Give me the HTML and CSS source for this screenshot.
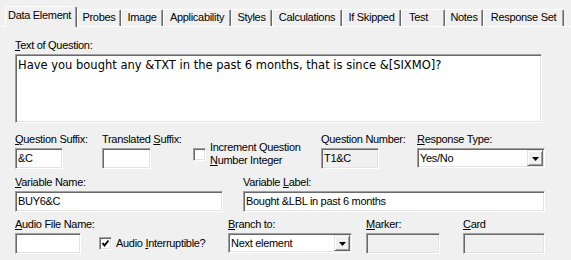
FILE: index.html
```html
<!DOCTYPE html>
<html>
<head>
<meta charset="utf-8">
<link rel="stylesheet" href="styles.css">
</head>
<body>
<div class="tabs">
  <div class="tab active">Data Element</div>
  <div class="tab">Probes</div>
  <div class="tab">Image</div>
  <div class="tab">Applicability</div>
  <div class="tab">Styles</div>
  <div class="tab">Calculations</div>
  <div class="tab">If Skipped</div>
  <div class="tab tab-left">Test</div>
  <div class="tab">Notes</div>
  <div class="tab">Response Set</div>
</div>
<div class="panel">
  <div class="lbl"><u>T</u>ext of Question:</div>
  <div class="textarea">Have you bought any &amp;TXT in the past 6 months, that is since &amp;[SIXMO]?</div>

  <div class="row row2">
    <div class="field">
      <div class="lbl"><u>Q</u>uestion Suffix:</div>
      <div class="input w-qsuffix">&amp;C</div>
    </div>
    <div class="field">
      <div class="lbl">Translated <u>S</u>uffix:</div>
      <div class="input w-tsuffix"></div>
    </div>
    <div class="check two-line">
      <div class="box"></div>
      <div class="check-text">Increment Question<br><u>N</u>umber Integer</div>
    </div>
    <div class="field">
      <div class="lbl">Question Number:</div>
      <div class="input disabled w-qnum">T1&amp;C</div>
    </div>
    <div class="field">
      <div class="lbl"><u>R</u>esponse Type:</div>
      <div class="select w-rtype">
        <span class="sel-text">Yes/No</span>
        <span class="drop"><svg width="7" height="4" viewBox="0 0 7 4"><polygon points="0,0 7,0 3.5,4" fill="#000"/></svg></span>
      </div>
    </div>
  </div>

  <div class="row row3">
    <div class="field">
      <div class="lbl"><u>V</u>ariable Name:</div>
      <div class="input w-vname">BUY6&amp;C</div>
    </div>
    <div class="field">
      <div class="lbl">Variable <u>L</u>abel:</div>
      <div class="input w-vlabel">Bought &amp;LBL in past 6 months</div>
    </div>
  </div>

  <div class="row row4">
    <div class="field">
      <div class="lbl"><u>A</u>udio File Name:</div>
      <div class="input w-audio"></div>
    </div>
    <div class="check one-line">
      <div class="box"><svg width="9" height="9" viewBox="0 0 9 9"><polyline points="1.5,4 3.5,6.5 7.5,1.5" fill="none" stroke="#000" stroke-width="2"/></svg></div>
      <div class="check-text">Audio <u>I</u>nterruptible?</div>
    </div>
    <div class="field">
      <div class="lbl"><u>B</u>ranch to:</div>
      <div class="select w-branch">
        <span class="sel-text">Next element</span>
        <span class="drop"><svg width="7" height="4" viewBox="0 0 7 4"><polygon points="0,0 7,0 3.5,4" fill="#000"/></svg></span>
      </div>
    </div>
    <div class="field">
      <div class="lbl"><u>M</u>arker:</div>
      <div class="input disabled w-marker"></div>
    </div>
    <div class="field">
      <div class="lbl"><u>C</u>ard</div>
      <div class="input disabled w-card"></div>
    </div>
  </div>
</div>
</body>
</html>
```
FILE: styles.css
```css
html, body {
  margin: 0;
  padding: 0;
}
body {
  width: 571px;
  height: 260px;
  overflow: hidden;
  background: #f0f0f0;
  font-family: "Liberation Sans", Arial, sans-serif;
  font-size: 11px;
  letter-spacing: -0.3px;
  color: #000;
}
u { text-decoration: underline; text-underline-offset: 1px; }

.tabs {
  display: grid;
  grid-template-columns: 72px 44px 42px 68px 41px 70px 59px 44px 38px 81px;
  align-items: end;
  padding-left: 5px;
  height: 27px;
  box-sizing: border-box;
  border-bottom: 1px solid #fff;
}
.tab {
  height: 17px;
  box-sizing: border-box;
  border-top: 1px solid #fff;
  border-left: 1px solid #fff;
  border-right: 1px solid #696969;
  box-shadow: inset -1px 0 #a0a0a0;
  border-radius: 2px 2px 0 0;
  background: #f0f0f0;
  text-align: center;
  line-height: 15px;
  white-space: nowrap;
}
.tab.tab-left {
  text-align: left;
  padding-left: 7px;
}
.tab.active {
  height: 21px;
  margin-bottom: -1px;
  line-height: 17px;
  text-align: left;
  padding-left: 2px;
}

.panel {
  padding: 12px 0 0 15px;
}
.lbl {
  line-height: 13px;
  height: 13px;
  margin-bottom: 2px;
  white-space: nowrap;
}
.textarea {
  width: 527px;
  height: 69px;
  box-sizing: border-box;
  background: #fff;
  border: 1px solid;
  border-color: #a0a0a0 #fff #fff #a0a0a0;
  box-shadow: inset 1px 1px #696969, inset -1px -1px #e3e3e3;
  padding: 4px 2px;
  font-family: "DejaVu Sans", Verdana, sans-serif;
  font-size: 11.5px;
  letter-spacing: 0;
  line-height: 13px;
}

.row { display: grid; }
.row2 {
  grid-template-columns: 87px 91px 128px 96px 127px;
  margin-top: 10px;
}
.row3 {
  grid-template-columns: 228px 302px;
  margin-top: 7px;
}
.row4 {
  grid-template-columns: 84px 129px 138px 97px 82px;
  margin-top: 6px;
}

.input, .select {
  height: 21px;
  box-sizing: border-box;
  background: #fff;
  border: 1px solid;
  border-color: #a0a0a0 #fff #fff #a0a0a0;
  box-shadow: inset 1px 1px #696969, inset -1px -1px #e3e3e3;
  padding: 0 2px;
  line-height: 19px;
  white-space: nowrap;
  overflow: hidden;
}
.input.disabled { background: #f0f0f0; }

.w-qsuffix { width: 48px; }
.w-tsuffix { width: 49px; }
.w-qnum { width: 58px; }
.w-rtype { width: 128px; }
.w-vname { width: 208px; }
.w-vlabel { width: 302px; }
.w-audio { width: 66px; }
.w-branch { width: 124px; }
.w-marker { width: 74px; }
.w-card { width: 82px; }

.select {
  display: flex;
  align-items: center;
  justify-content: space-between;
  height: 20px;
  padding: 1px 1px 1px 2px;
}
.sel-text { line-height: 16px; }
.drop {
  width: 16px;
  height: 16px;
  box-sizing: border-box;
  background: #f0f0f0;
  border: 1px solid;
  border-color: #e3e3e3 #696969 #696969 #e3e3e3;
  box-shadow: inset 1px 1px #fff, inset -1px -1px #a0a0a0;
  display: flex;
  align-items: center;
  justify-content: center;
}
.drop svg { display: block; margin-top: 1px; }

.check {
  display: flex;
  align-items: center;
  gap: 4px;
  align-self: end;
}
.check.two-line {
  margin-bottom: 2px;
}
.check.one-line {
  height: 21px;
}
.check-text { line-height: 13px; white-space: nowrap; }
.box {
  width: 13px;
  height: 13px;
  box-sizing: border-box;
  background: #fff;
  border: 1px solid;
  border-color: #a0a0a0 #fff #fff #a0a0a0;
  box-shadow: inset 1px 1px #696969, inset -1px -1px #e3e3e3;
  display: flex;
  align-items: center;
  justify-content: center;
  flex: none;
}
.box svg { display: block; }
```
